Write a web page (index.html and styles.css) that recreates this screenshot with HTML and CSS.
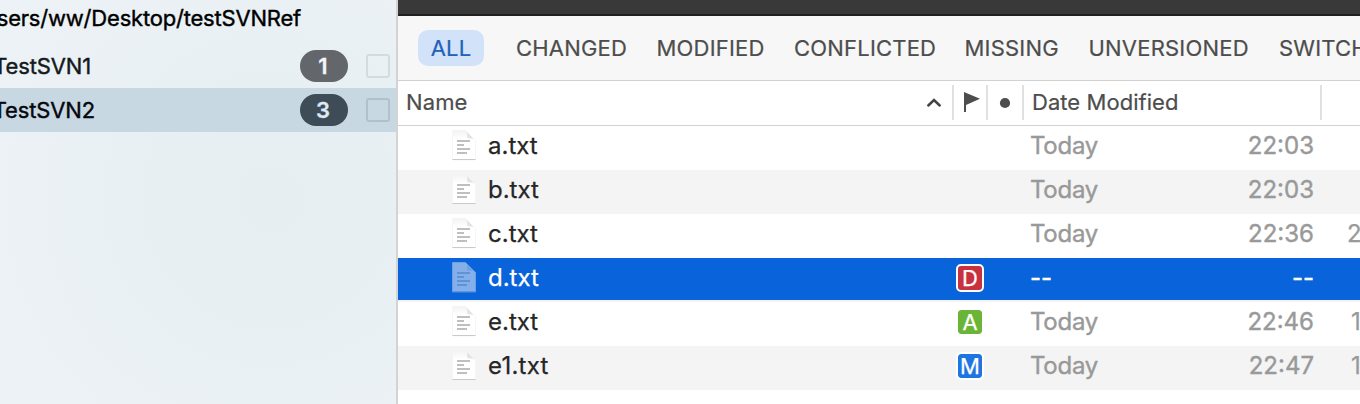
FILE: index.html
```html
<!DOCTYPE html>
<html lang="en">
<head>
<meta charset="utf-8">
<title>testSVNRef</title>
<link rel="stylesheet" href="styles.css">
</head>
<body>
<svg class="defs" width="0" height="0">
  <defs>
    <linearGradient id="fold" x1="0" y1="1" x2="1" y2="0">
      <stop offset="0" stop-color="#fff"/><stop offset=".45" stop-color="#dedede"/><stop offset="1" stop-color="#fff"/>
    </linearGradient>
    <linearGradient id="paper" x1="0" y1="0" x2="0" y2="1">
      <stop offset="0" stop-color="#f3f3f3"/><stop offset=".3" stop-color="#fff"/><stop offset="1" stop-color="#fff"/>
    </linearGradient>
    <symbol id="doc" viewBox="0 0 24 31">
      <path class="page" d="M.5.5H13.5L23.500 10.500V30H.5Z"/>
      <path class="corner" d="M13 .5C15.500 2 15.500 5 15 8.500C18.500 8 21.500 8.500 23.500 11Z"/>
      <path class="edge" d="M.5 29.500H23.500"/>
      <path class="lines" d="M5 11H18M5 15H12M5 19H18M5 23H15"/>
    </symbol>
  </defs>
</svg>
<div class="window">
  <aside class="sidebar">
    <div class="path"><span>sers/ww/Desktop/testSVNRef</span></div>
    <div class="repo"><span class="repo-name one">TestSVN1</span><span class="count">1</span><span class="check"></span></div>
    <div class="repo active"><span class="repo-name two">TestSVN2</span><span class="count">3</span><span class="check"></span></div>
  </aside>
  <main class="main">
    <div class="titlebar"></div>
    <nav class="filters">
      <span class="filter on">ALL</span>
      <span class="filter changed">CHANGED</span>
      <span class="filter modified">MODIFIED</span>
      <span class="filter conflicted">CONFLICTED</span>
      <span class="filter missing">MISSING</span>
      <span class="filter unversioned">UNVERSIONED</span>
      <span class="filter switched">SWITCHED</span>
    </nav>
    <div class="head grid">
      <div class="h-name"><span>Name</span><svg width="16" height="10" viewBox="0 0 16 10"><path d="M2.300 7.500L8 2L13.700 7.500" fill="none" stroke="#444" stroke-width="2.500" stroke-linecap="round"/></svg></div>
      <div class="h-icon flag"><svg width="16" height="20" viewBox="0 0 16 20"><path d="M0 0L16 6.800L2 13V20H0Z" fill="#4d4d4d"/></svg></div>
      <div class="h-icon"><svg width="12" height="12" viewBox="0 0 12 12"><circle cx="6" cy="6" r="5.100" fill="#4d4d4d"/></svg></div>
      <div class="h-date">Date Modified</div>
      <div></div>
    </div>
    <div class="row grid"><div class="file"><svg class="doc"><use href="#doc"/></svg><span>a.txt</span></div><div></div><div></div><div class="date"><span>Today</span><span>22:03</span></div><div class="size"></div></div>
    <div class="row grid alt"><div class="file"><svg class="doc"><use href="#doc"/></svg><span>b.txt</span></div><div></div><div></div><div class="date"><span>Today</span><span>22:03</span></div><div class="size"></div></div>
    <div class="row grid"><div class="file"><svg class="doc"><use href="#doc"/></svg><span>c.txt</span></div><div></div><div></div><div class="date"><span>Today</span><span>22:36</span></div><div class="size">2</div></div>
    <div class="row grid selected"><div class="file"><svg class="doc"><use href="#doc"/></svg><span>d.txt</span></div><div class="state"><b class="badge deleted">D</b></div><div></div><div class="date"><span>--</span><span>--</span></div><div class="size"></div></div>
    <div class="row grid"><div class="file"><svg class="doc"><use href="#doc"/></svg><span>e.txt</span></div><div class="state"><b class="badge added">A</b></div><div></div><div class="date"><span>Today</span><span>22:46</span></div><div class="size ten">1</div></div>
    <div class="row grid alt"><div class="file"><svg class="doc"><use href="#doc"/></svg><span class="wide">e1.txt</span></div><div class="state"><b class="badge changed-file">M</b></div><div></div><div class="date"><span>Today</span><span>22:47</span></div><div class="size ten">1</div></div>
  </main>
</div>
</body>
</html>
```
FILE: styles.css
```css
* { box-sizing: border-box; }
body { margin: 0; overflow: hidden; font-family: Inter, "Liberation Sans", sans-serif; white-space: nowrap; }
.defs { display: block; }
.window { display: flex; width: 1360px; height: 404px; overflow: hidden; background: #fff; }

.sidebar {
  flex: none; width: 398px; border-right: 2px solid #d3d3d5; overflow: hidden;
  background: radial-gradient(circle at 270px 200px, #e7eef2 0%, #e9f0f4 45%, #edf2f6 100%);
  font-size: 22px; color: #0a0a0a;
}
.path { display: flex; justify-content: flex-end; align-items: center; width: 301px; height: 44px; padding-bottom: 8px; color: #000; letter-spacing: -0.200px; -webkit-text-stroke: 0.400px #000; }
.repo { display: flex; align-items: center; height: 44px; padding-right: 6px; color: #15191c; -webkit-text-stroke: 0.400px currentColor; }
.repo.active { background: #c8d8e3; color: #05070f; }
.repo-name { display: flex; justify-content: flex-end; letter-spacing: -0.150px; }
.repo-name.one { width: 91px; }
.repo-name.two { width: 95px; }
.count { display: grid; place-items: center; width: 48px; height: 32px; margin-left: auto; padding-right: 2px; border-radius: 16px; background: #63666a; color: #f3f6fa; font-weight: 600; -webkit-text-stroke: 0.300px currentColor; }
.active .count { background: #3e4c57; color: #dceaf5; }
.check { width: 24px; height: 24px; margin-left: 18px; border: 2px solid #d5dadf; border-radius: 3px; }
.active .check { border-color: #b0c1cd; }

.main { flex: none; width: 962px; overflow: hidden; }
.titlebar { height: 16px; background: #393939; border-bottom: 2px solid #221f20; }
.filters { display: flex; align-items: center; height: 65px; padding: 0 0 1px 20px; background: #f7f7f7; border-bottom: 1px solid #d2d2d2; font-size: 22px; color: #4d4d4d; letter-spacing: 0.200px; -webkit-text-stroke: 0.200px currentColor; overflow: hidden; }
.filter { flex: none; line-height: 36px; }
.filter.on { width: 66px; height: 36px; margin-right: 32px; border-radius: 10px; background: #d2e2f8; color: #1e63b8; text-align: center; }
.changed { width: 140.500px; }
.modified { width: 137.500px; }
.conflicted { width: 170.500px; }
.missing { width: 124px; }
.unversioned { width: 190.500px; }

.grid { display: grid; grid-template-columns: 556px 34px 36px 298px 1fr; }
.head { height: 45px; padding: 4px 0 5px; border-bottom: 1px solid #d2d2d2; font-size: 22px; color: #4d4d4d; letter-spacing: 0.050px; -webkit-text-stroke: 0.200px currentColor; }
.head > div { display: flex; align-items: center; border-right: 2px solid #e0e0e0; }
.head > div:last-child { border: 0; }
.h-name { justify-content: space-between; padding: 0 10px 0 8px; }
.h-name span { padding-bottom: 2px; letter-spacing: 0.100px; }
.h-icon { justify-content: center; }
.flag { padding: 0 0 2px 4px; }
.h-date { padding: 0 0 2px 8px; }

.row { height: 44px; font-size: 24px; color: #262626; line-height: 40px; -webkit-text-stroke: 0.250px currentColor; }
.alt { background: #f4f4f5; }
.file { display: flex; padding-left: 54px; }
.wide { letter-spacing: 0.250px; }
.doc { width: 24px; height: 31px; margin: 4px 12px 0 0; }
.page { fill: var(--page, url(#paper)); stroke: var(--page, #f1f1f1); stroke-width: .6; }
.corner { fill: var(--corner, url(#fold)); }
.edge { stroke: var(--edge, #cacaca); stroke-width: 1; }
.lines { fill: none; stroke: var(--lines, #bfbfbf); stroke-width: 1.900; }
.state { display: flex; justify-content: center; padding: 6px 2px 0 0; }
.badge { display: grid; place-items: center; width: 28px; height: 28px; border: 2px solid #fff; border-radius: 5px; color: #fff; font-size: 22px; font-weight: 400; line-height: 24px; background-clip: padding-box; }
.deleted { background-color: #c8323f; }
.added { background-color: #6bb536; }
.changed-file { background-color: #1f74e0; }
.date { display: flex; justify-content: space-between; padding: 0 8px 0 6px; color: #999; letter-spacing: -0.250px; -webkit-text-stroke: 0.400px currentColor; }
.date span:last-child { letter-spacing: 0; }
.size { padding-left: 25px; color: #999; }
.size.ten { padding-left: 29px; }
.selected {
  border-bottom: 2px solid #f4f4f5; background: #0963da; color: #fff;
  --page: #84afe9; --corner: #6f9fe2; --edge: #5f94dc; --lines: #5f92d6;
}
.selected .date { color: #fff; letter-spacing: 0; }
```
